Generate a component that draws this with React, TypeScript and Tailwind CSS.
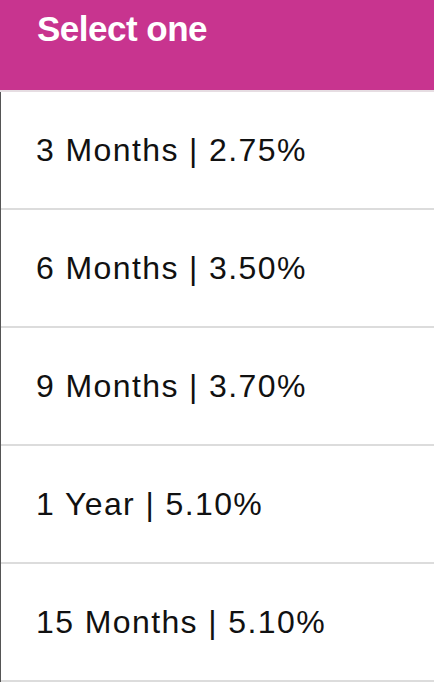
const options = [
  "3 Months | 2.75%",
  "6 Months | 3.50%",
  "9 Months | 3.70%",
  "1 Year | 5.10%",
  "15 Months | 5.10%",
];

export default function App() {
  return (
    <div
      className="h-[685px] w-[434px] overflow-hidden bg-white"
      style={{ fontFamily: '"Liberation Sans", Arial, sans-serif' }}
    >
      {/* Header */}
      <div className="h-[90px] bg-[#c8348f] pl-[37px] pt-[11px]">
        <h1 className="text-[35px] font-bold leading-[35px] tracking-[-0.5px] text-white">
          Select one
        </h1>
      </div>
      <div className="h-[2px] bg-[#e6dde2]" />

      {/* Options */}
      <ul className="border-l border-[#555]">
        {options.map((label) => (
          <li
            key={label}
            className="flex h-[118px] items-center border-b-2 border-[#dcdcdc] pl-[35px] text-[32px] tracking-[1.4px] text-[#111]"
          >
            {label}
          </li>
        ))}
      </ul>
    </div>
  );
}
